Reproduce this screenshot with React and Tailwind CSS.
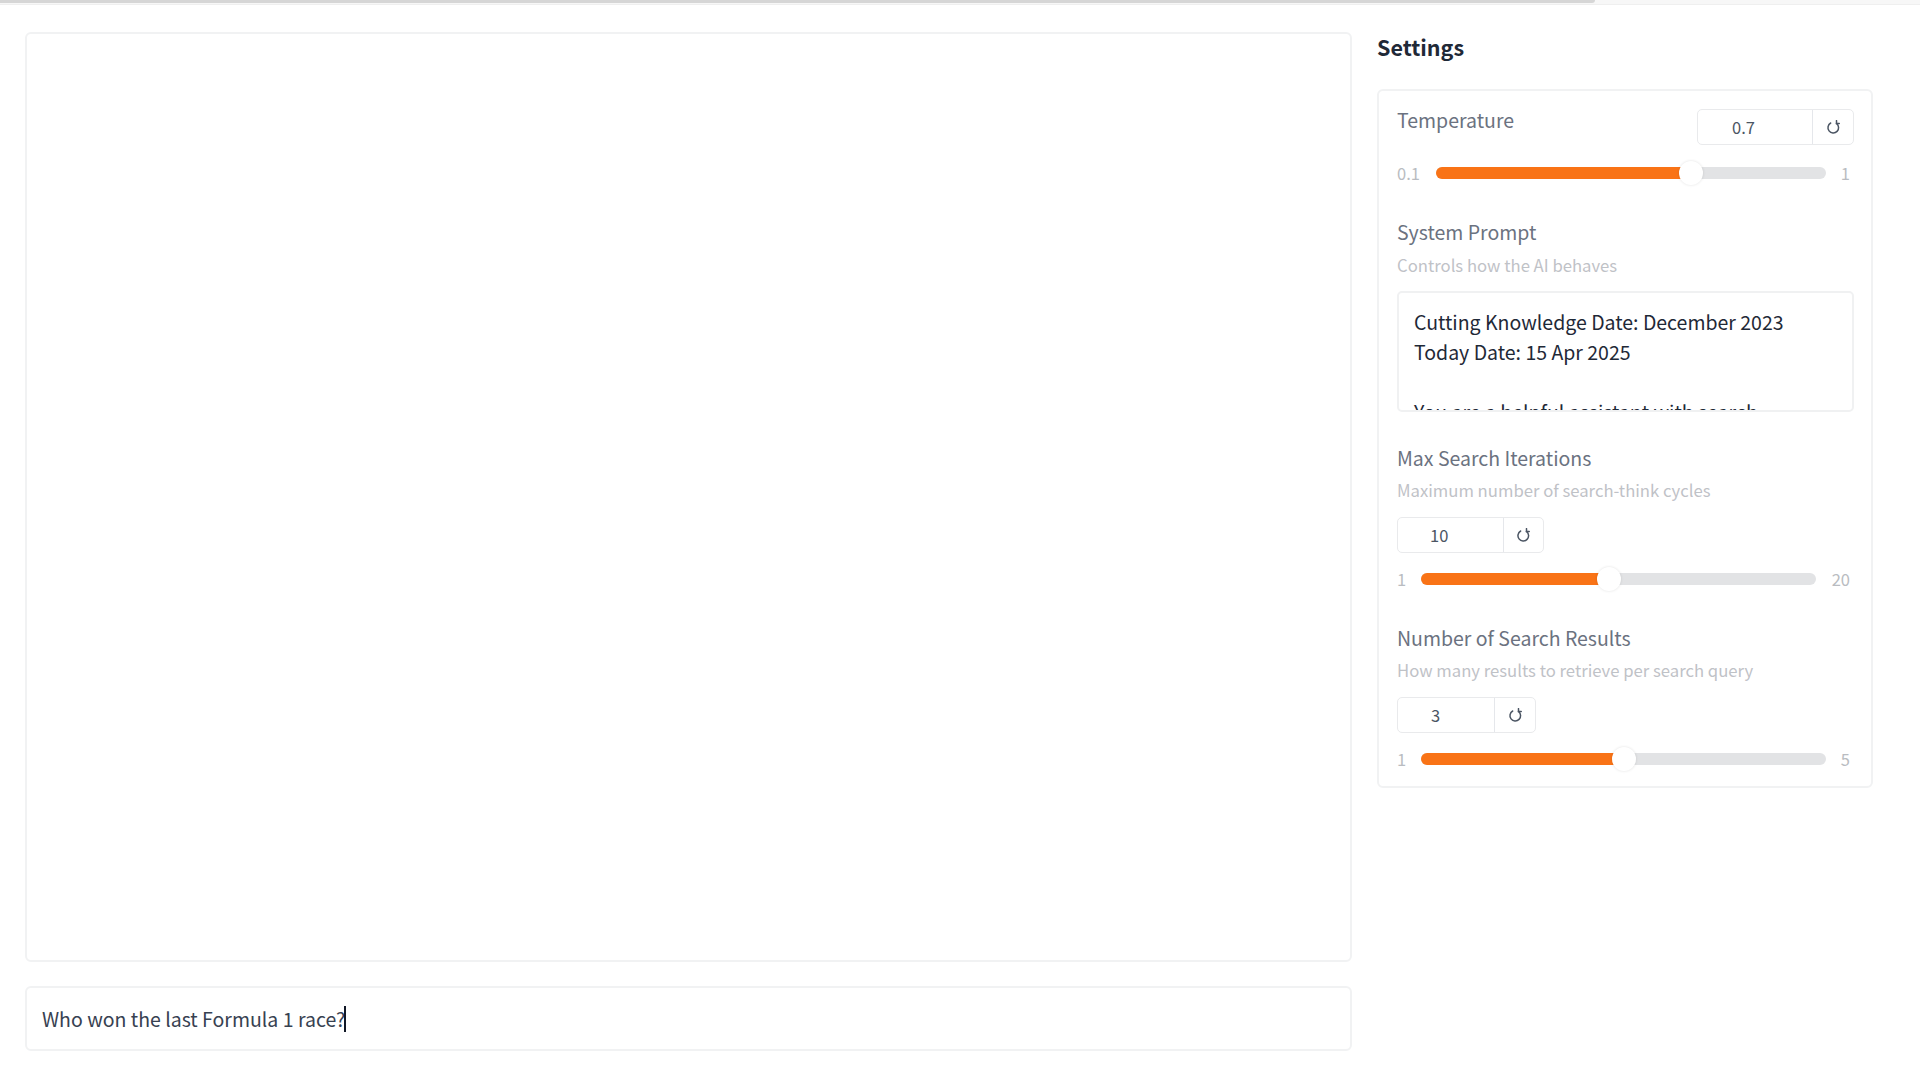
import React from "react";

const font = { fontFamily: '"Noto Sans CJK SC", "Noto Sans", sans-serif' };

function ResetIcon() {
  return (
    <svg width="15" height="15" viewBox="0 0 24 24" fill="none" stroke="#4b5563" strokeWidth="2.4" strokeLinecap="round">
      <path d="M7.5 4.8a8.5 8.5 0 1 0 9.2.6" />
      <path d="M16.8 1v4.6h4.4" />
    </svg>
  );
}

function NumberBox({ value, inputW, resetW, pad }) {
  return (
    <div className="flex h-[36px] rounded-[5px] border border-[#e9eaec] bg-white text-[16.5px] text-[#4b5563]">
      <div className="flex items-center border-r border-[#e5e7eb]" style={{ width: inputW, paddingLeft: pad }}>
        {value}
      </div>
      <div className="flex items-center justify-center" style={{ width: resetW }}>
        <ResetIcon />
      </div>
    </div>
  );
}

function Slider({ min, max, percent, minW, trackW }) {
  return (
    <div className="flex h-[20px] items-center text-[16.5px] leading-[20px] text-[#b9bcc1]">
      <span className="shrink-0" style={{ width: minW }}>{min}</span>
      <div className="relative h-[12px] rounded-full bg-[#e2e3e5]" style={{ width: trackW }}>
        <div className="h-full rounded-l-full bg-[#f97316]" style={{ width: `${percent}%` }} />
        <div
          className="absolute top-1/2 h-[24px] w-[24px] -translate-x-1/2 -translate-y-1/2 rounded-full bg-white shadow-[0_0_3px_rgba(0,0,0,0.12)]"
          style={{ left: `${percent}%` }}
        />
      </div>
      <span className="flex-1 pr-[4px] text-right">{max}</span>
    </div>
  );
}

function Label({ children }) {
  return <div className="text-[19.5px] leading-[26px] text-[#6b7280]">{children}</div>;
}

function Hint({ children }) {
  return <div className="mt-[6px] text-[16.7px] leading-[26px] text-[#bfc2c7]">{children}</div>;
}

export default function App() {
  return (
    <div className="h-[1080px] w-[1920px] overflow-hidden bg-white" style={font}>
      <div className="h-[5px] border-b border-[#efefef] bg-[#f7f7f7]">
        <div className="h-[3px] w-[1595px] rounded-br-sm bg-[#d6d6d6]" />
      </div>

      <div className="flex pl-[25px] pt-[27px]">
        <div className="w-[1327px]">
          <div className="h-[930px] rounded-[6px] border-2 border-[#f1f2f3] bg-white" />
          <div className="mt-[24px] flex h-[65px] items-center rounded-[6px] border-2 border-[#f1f2f3] bg-white pl-[15px] text-[19.5px] text-[#374151]">
            Who won the last Formula 1 race?
            <span className="ml-[-1px] h-[26px] w-[1.5px] bg-[#111827]" />
          </div>
        </div>

        <div className="ml-[25px] w-[496px]">
          <h2 className="h-[57px] pt-[1px] text-[21.5px] font-semibold leading-[28px] text-[#1f2937]">Settings</h2>

          <div className="h-[699px] rounded-[6px] border-2 border-[#f1f2f3] bg-white pl-[18px] pr-[17px] pt-[18px]">
            <div className="flex items-start justify-between">
              <div className="mt-[-2px]"><Label>Temperature</Label></div>
              <NumberBox value="0.7" inputW={115} resetW={40} pad={34} />
            </div>
            <div className="mt-[18px]">
              <Slider min="0.1" max="1" percent={65.5} minW={39} trackW={390} />
            </div>

            <div className="mt-[36px] pb-[1px]"><Label>System Prompt</Label></div>
            <Hint>Controls how the AI behaves</Hint>
            <div className="mt-[13px] h-[121px] overflow-hidden rounded-[5px] border-2 border-[#f0f1f2] bg-white px-[15px] pt-[14px] text-[19.5px] leading-[30px] text-[#1f2937]">
              <div>Cutting Knowledge Date: December 2023</div>
              <div>Today Date: 15 Apr 2025</div>
              <div>&nbsp;</div>
              <div>You are a helpful assistant with search</div>
            </div>

            <div className="mt-[33px]"><Label>Max Search Iterations</Label></div>
            <Hint>Maximum number of search-think cycles</Hint>
            <div className="mt-[14px] w-[147px]">
              <NumberBox value="10" inputW={106} resetW={39} pad={32} />
            </div>
            <div className="mt-[16px]">
              <Slider min="1" max="20" percent={47.7} minW={24} trackW={395} />
            </div>

            <div className="mt-[36px]"><Label>Number of Search Results</Label></div>
            <Hint>How many results to retrieve per search query</Hint>
            <div className="mt-[14px] w-[139px]">
              <NumberBox value="3" inputW={97} resetW={40} pad={33} />
            </div>
            <div className="mt-[16px]">
              <Slider min="1" max="5" percent={50.2} minW={24} trackW={405} />
            </div>
          </div>
        </div>
      </div>
    </div>
  );
}
